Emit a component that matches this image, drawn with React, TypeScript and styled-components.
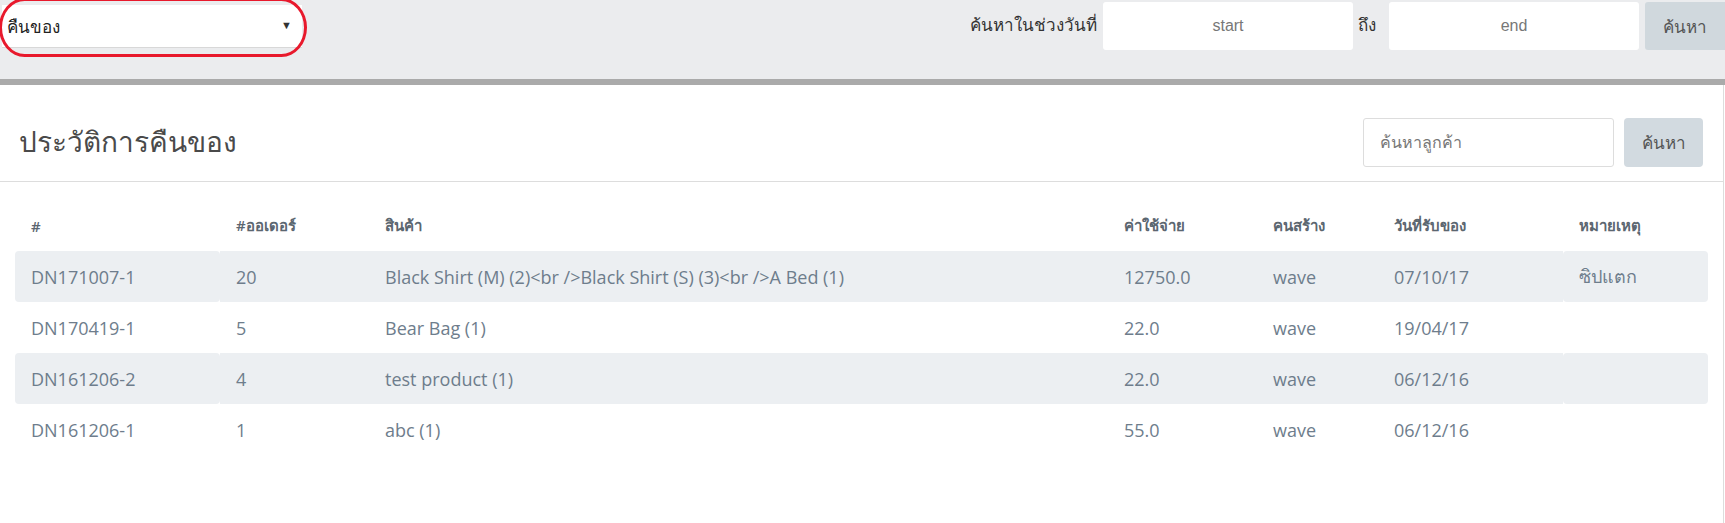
import styled, { createGlobalStyle } from 'styled-components'

const GlobalStyle = createGlobalStyle`
  body {
    margin: 0;
    background: #fff;
    font-family: 'Open Sans', 'Noto Sans', Tahoma, sans-serif;
  }
`

const rows = [
  { id: 'DN171007-1', order: '20', item: 'Black Shirt (M) (2)<br />Black Shirt (S) (3)<br />A Bed (1)', cost: '12750.0', by: 'wave', date: '07/10/17', note: 'ซิปแตก' },
  { id: 'DN170419-1', order: '5', item: 'Bear Bag (1)', cost: '22.0', by: 'wave', date: '19/04/17', note: '' },
  { id: 'DN161206-2', order: '4', item: 'test product (1)', cost: '22.0', by: 'wave', date: '06/12/16', note: '' },
  { id: 'DN161206-1', order: '1', item: 'abc (1)', cost: '55.0', by: 'wave', date: '06/12/16', note: '' }
]

const cols = [
  { label: '#', width: 205 },
  { label: '#ออเดอร์', width: 149 },
  { label: 'สินค้า', width: 739 },
  { label: 'ค่าใช้จ่าย', width: 149 },
  { label: 'คนสร้าง', width: 121 },
  { label: 'วันที่รับของ', width: 185 },
  { label: 'หมายเหตุ', width: 145 }
]

export default function App () {
  return (
    <>
      <GlobalStyle />
      <TopBar>
        <TypeSelect>
          <span>คืนของ</span>
          <Caret>▼</Caret>
        </TypeSelect>
        <DateSearch>
          <Label>ค้นหาในช่วงวันที่</Label>
          <DateInput placeholder='start' />
          <Label narrow>ถึง</Label>
          <DateInput placeholder='end' />
          <TopButton>ค้นหา</TopButton>
        </DateSearch>
      </TopBar>
      <Divider />
      <Card>
        <CardHeader>
          <Title>ประวัติการคืนของ</Title>
          <SearchGroup>
            <SearchInput placeholder='ค้นหาลูกค้า' />
            <SearchButton>ค้นหา</SearchButton>
          </SearchGroup>
        </CardHeader>
        <TableWrap>
          <Table>
            <colgroup>
              {cols.map(c => (
                <col key={c.label} style={{ width: c.width }} />
              ))}
            </colgroup>
            <thead>
              <tr>
                {cols.map(c => (
                  <Th key={c.label}>{c.label}</Th>
                ))}
              </tr>
            </thead>
            <tbody>
              {rows.map((r, i) => (
                <Row key={r.id} striped={i % 2 === 0}>
                  <Td>{r.id}</Td>
                  <Td>{r.order}</Td>
                  <Td>{r.item}</Td>
                  <Td>{r.cost}</Td>
                  <Td>{r.by}</Td>
                  <Td>{r.date}</Td>
                  <Td>{r.note}</Td>
                </Row>
              ))}
            </tbody>
          </Table>
        </TableWrap>
      </Card>
    </>
  )
}

const TopBar = styled.div`
  height: 79px;
  background: #ebecee;
  display: flex;
  justify-content: space-between;
  align-items: flex-start;
`

const TypeSelect = styled.div`
  position: relative;
  box-sizing: border-box;
  width: 300px;
  height: 43px;
  margin: 5px 0 0 2px;
  padding: 0 10px 0 5px;
  background: #fff;
  border-bottom: 1px solid #d8d8d8;
  display: flex;
  align-items: center;
  justify-content: space-between;
  font-size: 17px;
  color: #222;

  /* red annotation ring drawn over the select */
  &::after {
    content: '';
    position: absolute;
    left: -3px;
    top: -7px;
    right: -5px;
    bottom: -10px;
    border: 3px solid #e8192c;
    border-radius: 26px / 30px;
    pointer-events: none;
  }
`

const Caret = styled.span`
  font-size: 11px;
  color: #333;
  margin-top: -4px;
`

const DateSearch = styled.div`
  display: flex;
  align-items: center;
  margin-top: 2px;
`

const Label = styled.span<{ narrow?: boolean }>`
  font-size: 17px;
  color: #333;
  padding: ${p => (p.narrow ? '0 13px 0 5px' : '0 6px')};
  margin-top: -4px;
`

const DateInput = styled.input`
  box-sizing: border-box;
  width: 250px;
  height: 48px;
  border: none;
  border-radius: 3px;
  background: #fff;
  text-align: center;
  font-family: 'Liberation Sans', Arial, sans-serif;
  font-size: 16px;
  outline: none;

  &::placeholder {
    color: #777;
  }
`

const TopButton = styled.button`
  box-sizing: border-box;
  width: 80px;
  height: 48px;
  margin-left: 6px;
  border: none;
  border-radius: 3px 0 0 3px;
  background: #d0d8dd;
  color: #555;
  font-family: inherit;
  font-size: 17px;
`

const Divider = styled.div`
  height: 6px;
  background: #aaa;
`

const Card = styled.div`
  background: #fff;
  margin-right: 1px;
  border-right: 1px solid #ddd;
  padding-bottom: 70px;
`

const CardHeader = styled.div`
  height: 97px;
  box-sizing: border-box;
  display: flex;
  align-items: center;
  justify-content: space-between;
  padding: 18px 20px 0 19px;
  border-bottom: 1px solid #ddd;
`

const Title = styled.h1`
  margin: 0;
  font-size: 28px;
  font-weight: 400;
  color: #4a4a4a;
`

const SearchGroup = styled.div`
  display: flex;
  gap: 10px;
`

const SearchInput = styled.input`
  box-sizing: border-box;
  width: 251px;
  height: 49px;
  padding: 0 16px;
  border: 1px solid #ddd;
  border-radius: 3px;
  font-family: inherit;
  font-size: 16px;
  outline: none;

  &::placeholder {
    color: #777;
  }
`

const SearchButton = styled.button`
  width: 79px;
  height: 49px;
  border: none;
  border-radius: 4px;
  background: #d2dae0;
  color: #555;
  font-family: inherit;
  font-size: 17px;
`

const TableWrap = styled.div`
  padding: 24px 16px 0 15px;
`

const Table = styled.table`
  width: 100%;
  table-layout: fixed;
  border-collapse: separate;
  border-spacing: 0;
`

const Th = styled.th`
  height: 45px;
  box-sizing: border-box;
  padding: 0 16px 6px;
  text-align: left;
  font-size: 15px;
  font-weight: 600;
  color: #5b6670;
  vertical-align: middle;
`

const Td = styled.td`
  height: 51px;
  padding: 0 16px;
  font-size: 18px;
  color: #6e7d8c;
  white-space: nowrap;

  &:first-child,
  &:last-child {
    border-radius: 4px;
  }
`

const Row = styled.tr<{ striped: boolean }>`
  td {
    background: ${p => (p.striped ? '#eceff2' : 'transparent')};
  }
`
